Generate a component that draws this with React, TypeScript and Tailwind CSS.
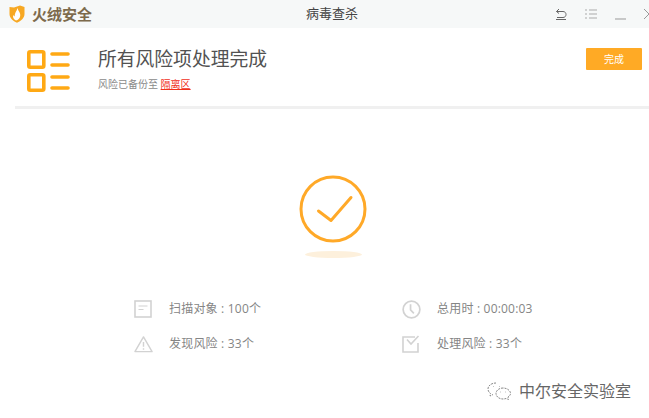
const FONT = "font-['Open_Sans','Noto_Sans_CJK_SC',sans-serif]";

function Logo() {
  return (
    <svg width="16" height="18" viewBox="0 0 16 18">
      <path d="M0.5 2 L5 2.5 L11 0.5 L15.5 2 L15.5 9 C15.5 13 12 16 8 17.8 C4 16 0.5 13 0.5 9 Z" fill="#f7a823" />
      <path d="M8.5 3 C9 6 11.8 7.5 11.2 11 C10.8 13.5 9 15 7 15.5 C4.6 14.5 3.6 12.5 4.2 10 C4.6 10.6 5 11.2 5.6 11.4 C5.4 8.2 7.8 6 8.5 3 Z" fill="#fff" />
    </svg>
  );
}

function ListIcon() {
  return (
    <svg width="43" height="42" viewBox="0 0 43 42" fill="none" stroke="#ffa914" strokeWidth="3.6" strokeLinecap="round">
      <rect x="1.8" y="1.8" width="15" height="15.4" rx="1.5" />
      <rect x="1.8" y="24.8" width="15" height="15.4" rx="1.5" />
      <path d="M25 4h16M25 15h16M25 27h16M25 38h16" />
    </svg>
  );
}

function Stat({ icon, label }: { icon: React.ReactNode; label: string }) {
  return (
    <div className="flex h-[20px] items-center">
      <div className="flex w-[35px] shrink-0 items-center">{icon}</div>
      <span className="text-[12px] tracking-[0.2px] text-[#858585]">{label}</span>
    </div>
  );
}

const gray = '#d2d2d2';

export default function App() {
  return (
    <div className={`relative h-[418px] w-[649px] overflow-hidden bg-white ${FONT}`}>
      {/* title bar */}
      <div className="flex h-[28px] items-center bg-[#f6f8f8] pl-[9px]">
        <div className="flex w-[220px] items-center gap-[7px]">
          <Logo />
          <span className="text-[15px] font-bold leading-none text-[#7d6a4c]">火绒安全</span>
        </div>
        <span className="ml-[77px] flex-1 text-[13px] text-[#444]">病毒查杀</span>
        <div className="flex w-[94px] shrink-0 items-center gap-[18px] overflow-hidden">
          <svg className="shrink-0" width="12" height="12" viewBox="0 0 12 12" fill="none" stroke="#666" strokeWidth="1">
            <path d="M4 1 L1.5 3.5 L4 5.5 M1.5 3.5 H8 C10 3.5 11 5 11 6.5 C11 8 10 9.5 8 9.5 H2 M1 11.5 H11" />
          </svg>
          <svg className="shrink-0" width="12" height="10" viewBox="0 0 12 10" stroke="#aaa" strokeWidth="1">
            <path d="M0 1h2M4 1h8M0 5h2M4 5h8M0 9h2M4 9h8" />
          </svg>
          <svg className="mt-[9px] shrink-0" width="11" height="2" viewBox="0 0 11 2" stroke="#999" strokeWidth="1">
            <path d="M0 1h11" />
          </svg>
          <svg className="shrink-0" width="10" height="10" viewBox="0 0 10 10" stroke="#999" strokeWidth="1">
            <path d="M0 0l10 10M10 0L0 10" />
          </svg>
        </div>
      </div>

      {/* result header */}
      <div className="ml-[15px] flex h-[81px] items-start border-b-[3px] border-[#f0f0f0] pl-[12px]">
        <div className="mt-[22px] w-[71px] shrink-0">
          <ListIcon />
        </div>
        <div className="mt-[17px] flex-1">
          <h1 className="text-[18.8px] leading-[28px] text-[#525252]">所有风险项处理完成</h1>
          <p className="mt-[4px] text-[10px] leading-[14px] text-[#8a8a8a]">
            风险已备份至 <span className="text-[#f0311c] underline">隔离区</span>
          </p>
        </div>
        <button className="mr-[7px] mt-[20px] h-[22px] w-[56px] rounded-[1px] bg-[#ffaa25] text-[10px] text-white">完成</button>
      </div>

      {/* done mark */}
      <div className="mt-[66px] flex flex-col items-center pl-[17px]">
        <svg width="68" height="68" viewBox="0 0 68 68" fill="none" stroke="#ffa928" strokeLinecap="round" strokeLinejoin="round">
          <circle cx="34" cy="34" r="32" strokeWidth="3" />
          <path d="M19.5 36 L32 45.5 L52 22.5" strokeWidth="3" />
        </svg>
        <div className="mt-[8px] h-[7px] w-[57px] rounded-[50%] bg-[#fdf0dc]" />
      </div>

      {/* stats */}
      <div className="ml-[134px] mt-[41px] grid grid-cols-[268px_1fr] gap-y-[15px]">
        <Stat
          label="扫描对象 : 100个"
          icon={
            <svg width="18" height="18" viewBox="0 0 18 18" fill="none" stroke={gray} strokeWidth="1.6">
              <rect x="1" y="1" width="16" height="16" />
              <path d="M4.5 6h9M4.5 9.5h5" strokeWidth="1.2" />
            </svg>
          }
        />
        <Stat
          label="总用时 : 00:00:03"
          icon={
            <svg width="19" height="19" viewBox="0 0 20 20" fill="none" stroke={gray} strokeWidth="1.8">
              <circle cx="10" cy="10" r="8.8" />
              <path d="M9 4.5 V10.5 L12.5 14" />
            </svg>
          }
        />
        <Stat
          label="发现风险 : 33个"
          icon={
            <svg width="19" height="18" viewBox="0 0 20 18" fill="none" stroke={gray} strokeWidth="1.5" strokeLinejoin="round">
              <path d="M10 1.5 L19 17 H1 Z" />
              <path d="M10 7v5M10 13.5v1.5" />
            </svg>
          }
        />
        <Stat
          label="处理风险 : 33个"
          icon={
            <svg width="18" height="18" viewBox="0 0 18 18" fill="none" stroke={gray} strokeWidth="1.6">
              <path d="M13 2 H1 V17 H16 V8" />
              <path d="M5 4.5 L9 9 L16.5 1" />
            </svg>
          }
        />
      </div>

      {/* watermark */}
      <div className="absolute left-[487px] top-[382px] flex items-center gap-[8px]">
        <svg width="24" height="18" viewBox="0 0 24 18" fill="none" stroke="#888" strokeWidth="1" strokeDasharray="2 1">
          <path d="M9 1 C4 1 1 4 1 7 C1 9 2 10.5 3.5 11.5 L3 14 L6 12.5" />
          <path d="M16 6 C12 6 9 8.5 9 11.5 C9 14.5 12 17 16 17 C17 17 18 16.8 19 16.5 L21.5 17.5 L21 15 C22.5 14 23.5 13 23.5 11.5 C23.5 8.5 20 6 16 6 Z" />
          <path d="M6 4.5h.5M12 4.5h.5M13.5 10h.5M18.5 10h.5" />
        </svg>
        <span className="text-[16px] leading-none text-[#666]">中尔安全实验室</span>
      </div>
    </div>
  );
}
